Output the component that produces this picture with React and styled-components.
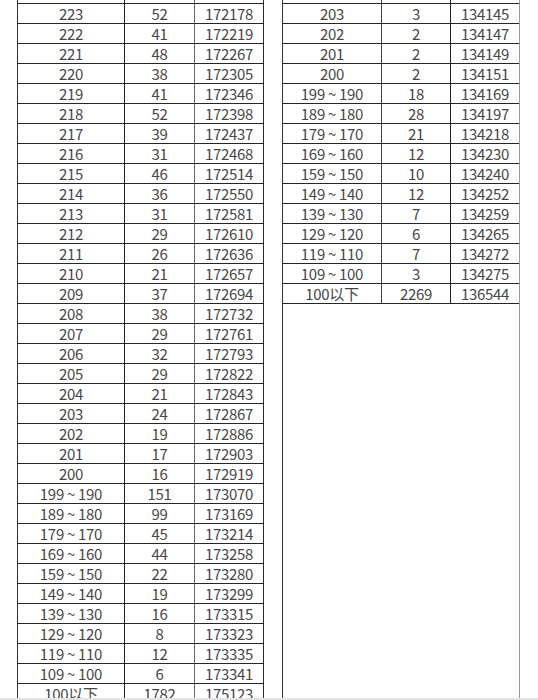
import React from "react";
import styled, { createGlobalStyle } from "styled-components";

const GlobalStyle = createGlobalStyle`
  html, body {
    margin: 0;
    padding: 0;
    background: #fff;
  }
  body {
    font-family: "Noto Sans CJK SC", "Liberation Sans", sans-serif;
  }
`;

const leftRows = [
  ["224", "41", "172126"],
  ["223", "52", "172178"],
  ["222", "41", "172219"],
  ["221", "48", "172267"],
  ["220", "38", "172305"],
  ["219", "41", "172346"],
  ["218", "52", "172398"],
  ["217", "39", "172437"],
  ["216", "31", "172468"],
  ["215", "46", "172514"],
  ["214", "36", "172550"],
  ["213", "31", "172581"],
  ["212", "29", "172610"],
  ["211", "26", "172636"],
  ["210", "21", "172657"],
  ["209", "37", "172694"],
  ["208", "38", "172732"],
  ["207", "29", "172761"],
  ["206", "32", "172793"],
  ["205", "29", "172822"],
  ["204", "21", "172843"],
  ["203", "24", "172867"],
  ["202", "19", "172886"],
  ["201", "17", "172903"],
  ["200", "16", "172919"],
  ["199 ~ 190", "151", "173070"],
  ["189 ~ 180", "99", "173169"],
  ["179 ~ 170", "45", "173214"],
  ["169 ~ 160", "44", "173258"],
  ["159 ~ 150", "22", "173280"],
  ["149 ~ 140", "19", "173299"],
  ["139 ~ 130", "16", "173315"],
  ["129 ~ 120", "8", "173323"],
  ["119 ~ 110", "12", "173335"],
  ["109 ~ 100", "6", "173341"],
  ["100以下", "1782", "175123"],
];

const rightRows = [
  ["204", "1", "134142"],
  ["203", "3", "134145"],
  ["202", "2", "134147"],
  ["201", "2", "134149"],
  ["200", "2", "134151"],
  ["199 ~ 190", "18", "134169"],
  ["189 ~ 180", "28", "134197"],
  ["179 ~ 170", "21", "134218"],
  ["169 ~ 160", "12", "134230"],
  ["159 ~ 150", "10", "134240"],
  ["149 ~ 140", "12", "134252"],
  ["139 ~ 130", "7", "134259"],
  ["129 ~ 120", "6", "134265"],
  ["119 ~ 110", "7", "134272"],
  ["109 ~ 100", "3", "134275"],
  ["100以下", "2269", "136544"],
];

const Page = styled.div`
  height: 698px;
  overflow: hidden;
  display: flex;
  align-items: stretch;
  gap: 18px;
  padding-left: 17px;
  border-bottom: 2px solid #e2e2e2;
`;

const Panel = styled.div`
  display: flex;
  flex-direction: column;
  border-left: 1px solid #333;
  border-right: 1px solid ${(p) => p.$edge || "#333"};
`;

const Grid = styled.div`
  display: grid;
  grid-template-columns: ${(p) => p.$cols};
  margin-top: -16px;
`;

const Cell = styled.div`
  box-sizing: border-box;
  height: 20px;
  display: flex;
  align-items: center;
  justify-content: center;
  border-bottom: 1px solid #262626;
  border-right: ${(p) => (p.$last ? "none" : `1px solid ${p.$line || "#262626"}`)};
  font-size: 15px;
  line-height: 1;
  color: #474747;
  white-space: nowrap;
  letter-spacing: -0.3px;
`;

function Table({ rows, cols, lines }) {
  return (
    <Grid $cols={cols}>
      {rows.map((r) =>
        r.map((v, i) => (
          <Cell key={r[0] + i} $last={i === 2} $line={lines[i]}>
            {v}
          </Cell>
        ))
      )}
    </Grid>
  );
}

export default function App() {
  return (
    <>
      <GlobalStyle />
      <Page>
        <Panel $edge="#2a2a2a">
          <Table rows={leftRows} cols="107px 70px 68px" lines={["#222", "#6a6a6a"]} />
        </Panel>
        <Panel $edge="#9a9a9a">
          <Table rows={rightRows} cols="99px 69px 68px" lines={["#444", "#222"]} />
        </Panel>
      </Page>
    </>
  );
}
